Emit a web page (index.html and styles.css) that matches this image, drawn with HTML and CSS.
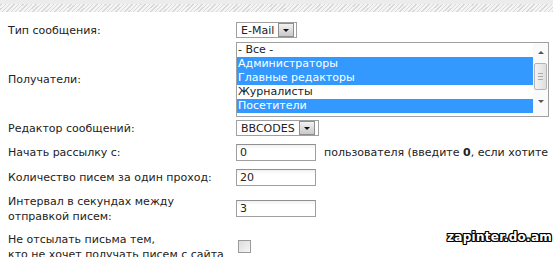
FILE: index.html
```html
<!DOCTYPE html>
<html lang="ru">

<head>
    <meta charset="UTF-8">
    <title>Рассылка</title>
    <link rel="stylesheet" href="styles.css">
</head>

<body>
    <div class="topbar"></div>

    <div class="form">
        <div class="lbl">Тип сообщения:</div>
        <div class="ctl">
            <span class="combo combo-mail">E-Mail <span class="drop"></span></span>
        </div>

        <div class="lbl">Получатели:</div>
        <div class="ctl">
            <div class="listbox">
                <ul class="opts">
                    <li>- Все -</li>
                    <li class="sel">Администраторы</li>
                    <li class="sel">Главные редакторы</li>
                    <li>Журналисты</li>
                    <li class="sel">Посетители</li>
                </ul>
                <div class="vscroll">
                    <span class="arr up"></span>
                    <span class="thumb"></span>
                    <span class="arr down"></span>
                </div>
            </div>
        </div>

        <div class="lbl">Редактор сообщений:</div>
        <div class="ctl">
            <span class="combo combo-bb">BBCODES <span class="drop"></span></span>
        </div>

        <div class="lbl">Начать рассылку с:</div>
        <div class="ctl">
            <span class="field">0</span>
            <span class="hint">пользователя (введите <b>0</b>, если хотите</span>
        </div>

        <div class="lbl">Количество писем за один проход:</div>
        <div class="ctl"><span class="field">20</span></div>

        <div class="lbl">Интервал в секундах между<br>отправкой писем:</div>
        <div class="ctl"><span class="field">3</span></div>

        <div class="lbl">Не отсылать письма тем,<br>кто не хочет получать писем с сайта</div>
        <div class="ctl"><span class="check"></span></div>
    </div>

    <div class="stamp">zapinter.do.am</div>
</body>

</html>
```

FILE: styles.css
```css
body {
    margin: 0;
    font-family: "DejaVu Sans", Verdana, sans-serif;
    font-size: 11px;
    color: #222;
    background: #fff;
    overflow: hidden;
    position: relative;
    height: 257px;
}

.topbar {
    height: 4px;
    background: #ececec;
    border-bottom: 8px solid transparent;
    border-image: repeating-linear-gradient(135deg, #d8d8d8 0 1px, #f4f4f4 1px 3px) 8;
}

.form {
    display: grid;
    grid-template-columns: 228px 1fr;
    grid-template-rows: 22px 76px 22px 27px 23px 39px 37px;
    align-items: center;
    padding: 7px 0 0 8px;
    line-height: 15px;
}

.ctl {
    display: flex;
    align-items: center;
}

/* fake dropdowns */
.combo {
    display: inline-flex;
    align-items: center;
    height: 14px;
    border: 1px solid #a0a0a0;
    padding-left: 4px;
    gap: 4px;
    background: #fff;
}

.drop {
    width: 14px;
    height: 12px;
    margin-right: 1px;
    border: 1px solid #8e8e8e;
    background: linear-gradient(#f2f2f2, #c9c9c9);
    position: relative;
}

.drop::after {
    content: "";
    position: absolute;
    left: 4px;
    top: 5px;
    border-left: 3px solid transparent;
    border-right: 3px solid transparent;
    border-top: 3px solid #111;
}

.combo-mail { width: 55px; }
.combo-bb { width: 77px; }

/* listbox */
.listbox {
    display: flex;
    width: 311px;
    height: 73px;
    border: 1px solid #a0a0a0;
    background: #fff;
}

.opts {
    list-style: none;
    margin: 0;
    padding: 0;
    flex: 1;
}

.opts li {
    height: 14px;
    line-height: 14px;
    padding-left: 1px;
}

.opts li.sel {
    background: #3399ff;
    color: #fff;
}

.vscroll {
    width: 15px;
    display: flex;
    flex-direction: column;
    align-items: center;
    background: #fafafa;
}

.arr {
    height: 20px;
    width: 15px;
    position: relative;
}

.arr::after {
    content: "";
    position: absolute;
    left: 5px;
    border-left: 3px solid transparent;
    border-right: 3px solid transparent;
}

.arr.up::after { top: 8px; border-bottom: 3px solid #555; }
.arr.down::after { top: 10px; border-top: 3px solid #555; }

.thumb {
    width: 11px;
    height: 25px;
    border: 1px solid #b5b5b5;
    border-radius: 2px;
    background: repeating-linear-gradient(#aaa 0 1px, transparent 1px 3px) 3px 9px / 5px 7px no-repeat,
        linear-gradient(90deg, #f4f4f4, #dedede);
    flex: none;
}

/* text fields */
.field {
    display: inline-block;
    width: 75px;
    height: 15px;
    line-height: 15px;
    border: 1px solid #a0a0a0;
    border-top-color: #909090;
    padding-left: 3px;
    background: linear-gradient(#f0f0f0, #fff 4px);
}

.hint {
    margin-left: 8px;
    white-space: nowrap;
}

.check {
    display: inline-block;
    width: 11px;
    height: 11px;
    margin: 0 0 0 2px;
    border: 1px solid #9a9a9a;
    background: linear-gradient(135deg, #dcdcdc, #f6f6f6);
}

.stamp {
    position: absolute;
    left: 447px;
    top: 230px;
    font-weight: bold;
    font-size: 12px;
    letter-spacing: 0.3px;
    color: #fff;
    text-shadow: 1px 0 #000, -1px 0 #000, 0 1px #000, 0 -1px #000,
        1px 1px #000, -1px -1px #000, 1px -1px #000, -1px 1px #000;
}
```
